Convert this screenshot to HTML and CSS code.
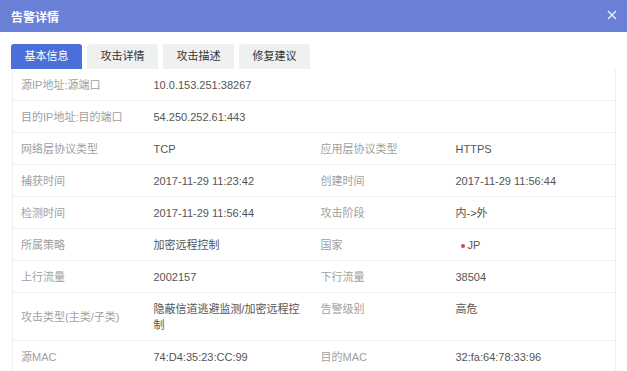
FILE: index.html
```html
<!DOCTYPE html>
<html lang="zh-CN">
	<head>
		<meta charset="UTF-8" />
		<title>告警详情</title>
		<link rel="stylesheet" href="styles.css">
	</head>
	<body>
		<div class="dialog">
			<div class="dialog-header">
				<span class="dialog-title">告警详情</span>
				<span class="close-btn">
					<svg width="10" height="10" viewBox="0 0 10 10"><path d="M1 1 L9 9 M9 1 L1 9" stroke="#e4e8f8" stroke-width="1.6" fill="none"/></svg>
				</span>
			</div>

			<div class="tabs">
				<div class="tab active">基本信息</div>
				<div class="tab">攻击详情</div>
				<div class="tab">攻击描述</div>
				<div class="tab">修复建议</div>
			</div>

			<table class="info-table">
				<colgroup>
					<col class="c-label1">
					<col class="c-value1">
					<col class="c-label2">
					<col class="c-value2">
				</colgroup>
				<tr>
					<td class="label">源IP地址:源端口</td>
					<td class="value" colspan="3">10.0.153.251:38267</td>
				</tr>
				<tr>
					<td class="label">目的IP地址:目的端口</td>
					<td class="value" colspan="3">54.250.252.61:443</td>
				</tr>
				<tr>
					<td class="label">网络层协议类型</td>
					<td class="value">TCP</td>
					<td class="label">应用层协议类型</td>
					<td class="value">HTTPS</td>
				</tr>
				<tr>
					<td class="label">捕获时间</td>
					<td class="value">2017-11-29 11:23:42</td>
					<td class="label">创建时间</td>
					<td class="value">2017-11-29 11:56:44</td>
				</tr>
				<tr>
					<td class="label">检测时间</td>
					<td class="value">2017-11-29 11:56:44</td>
					<td class="label">攻击阶段</td>
					<td class="value">内->外</td>
				</tr>
				<tr>
					<td class="label">所属策略</td>
					<td class="value">加密远程控制</td>
					<td class="label">国家</td>
					<td class="value"><span class="dot"></span>JP</td>
				</tr>
				<tr>
					<td class="label">上行流量</td>
					<td class="value">2002157</td>
					<td class="label">下行流量</td>
					<td class="value">38504</td>
				</tr>
				<tr>
					<td class="label">攻击类型(主类/子类)</td>
					<td class="value">隐蔽信道逃避监测/加密远程控制</td>
					<td class="label top">告警级别</td>
					<td class="value top">高危</td>
				</tr>
				<tr>
					<td class="label">源MAC</td>
					<td class="value">74:D4:35:23:CC:99</td>
					<td class="label">目的MAC</td>
					<td class="value">32:fa:64:78:33:96</td>
				</tr>
			</table>
		</div>
	</body>
</html>
```

FILE: styles.css
```css
body {
	margin: 0;
	padding: 0;
	background-color: #ffffff;
	font-family: "Liberation Sans", "Noto Sans CJK SC", sans-serif;
	font-size: 11px;
	overflow: hidden;
}

.dialog {
	width: 627px;
}

.dialog-header {
	height: 32px;
	background-color: #6a80d6;
	display: flex;
	align-items: center;
	justify-content: space-between;
	padding: 0 11px;
}

.dialog-title {
	color: #ffffff;
	font-size: 12px;
	font-weight: bold;
}

.close-btn {
	display: flex;
	margin-right: -1px;
	margin-top: -2px;
}

.tabs {
	display: flex;
	gap: 5px;
	padding: 12px 0 0 11px;
}

.tab {
	width: 71px;
	height: 25px;
	line-height: 25px;
	background-color: #eef1f0;
	color: #333333;
	border-radius: 3px 3px 0 0;
	text-align: center;
}

.tab.active {
	background-color: #4a6fd8;
	color: #ffffff;
}

.info-table {
	margin-left: 12px;
	width: 603px;
	border-collapse: collapse;
	table-layout: fixed;
	border-left: 1px solid #efefef;
	border-right: 1px solid #efefef;
}

.c-label1 { width: 133px; }
.c-value1 { width: 167px; }
.c-label2 { width: 135px; }
.c-value2 { width: 168px; }

.info-table td {
	padding: 8px 8px 7px;
	line-height: 16px;
	border-bottom: 1px solid #efefef;
	vertical-align: middle;
	word-break: break-all;
}

.info-table td.top {
	vertical-align: top;
}

.label {
	color: #a0a0a0;
}

.value {
	color: #555555;
}

.value .dot {
	display: inline-block;
	width: 4px;
	height: 4px;
	border-radius: 50%;
	background-color: #d9414b;
	margin: 0 3px 1px 5px;
	vertical-align: middle;
}
```
